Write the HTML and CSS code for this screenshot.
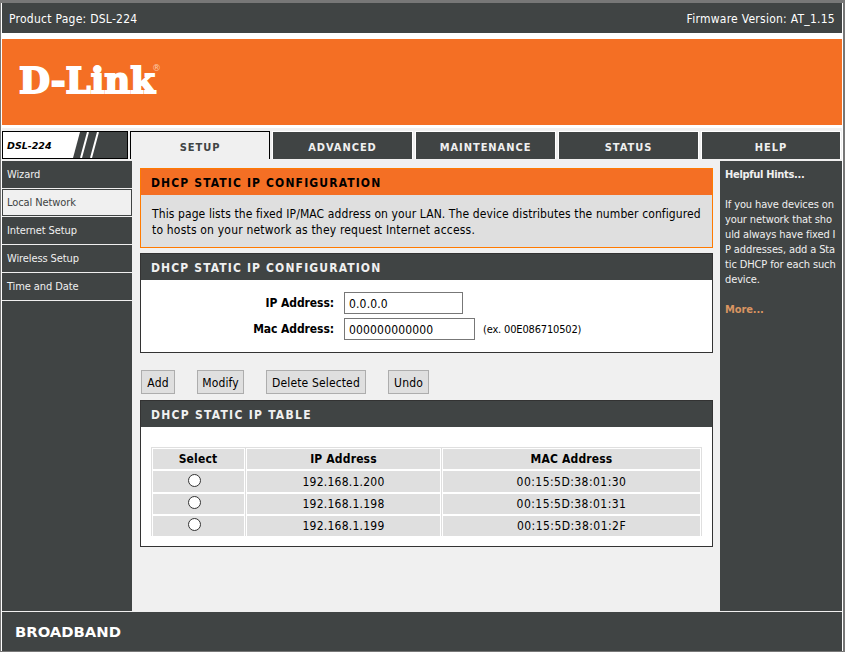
FILE: index.html
```html
<!DOCTYPE html>
<html lang="en">
<head>
<meta charset="utf-8">
<title>DHCP Static IP Configuration</title>
<link rel="stylesheet" href="styles.css">
</head>
<body>
<div class="page">
  <header class="topbar"><span class="product">Product Page: DSL-224</span><span class="firmware">Firmware Version: AT_1.15</span></header>
  <div class="banner">
    <svg width="150" height="40" viewBox="0 0 150 40"><text class="logo" x="2" y="32.5" textLength="136" lengthAdjust="spacingAndGlyphs">D-Link</text><text class="reg" x="135" y="11">®</text></svg>
  </div>
  <nav class="tabs">
    <div class="model"><span>DSL-224</span>
      <svg width="54" height="26" viewBox="0 0 54 26"><path class="slab" d="M7 0H54V26H0Z"/><path class="stripe" d="M15 0L8 26M25 0L18 26"/></svg>
    </div>
    <div class="tab active"><span>SETUP</span></div>
    <div class="tab"><span>ADVANCED</span></div>
    <div class="tab"><span>MAINTENANCE</span></div>
    <div class="tab"><span>STATUS</span></div>
    <div class="tab last"><span>HELP</span></div>
  </nav>
  <div class="columns">
    <aside class="menu">
      <div class="item">Wizard</div>
      <div class="item current">Local Network</div>
      <div class="item">Internet Setup</div>
      <div class="item">Wireless Setup</div>
      <div class="item">Time and Date</div>
    </aside>
    <main>
      <section class="panel intro">
        <h2>DHCP STATIC IP CONFIGURATION</h2>
        <p><span class="line1">This page lists the fixed IP/MAC address on your LAN. The device distributes the number configured</span><br><span class="line2">to hosts on your network as they request Internet access.</span></p>
      </section>
      <section class="panel config">
        <h2>DHCP STATIC IP CONFIGURATION</h2>
        <div class="field"><label for="ip">IP Address:</label><input id="ip" class="ip" value="0.0.0.0"></div>
        <div class="field"><label for="mac">Mac Address:</label><input id="mac" class="mac" value="000000000000"><small>(ex. 00E086710502)</small></div>
      </section>
      <div class="buttons"><button class="b1">Add</button><button class="b2">Modify</button><button class="b3">Delete Selected</button><button class="b4">Undo</button></div>
      <section class="panel list">
        <h2>DHCP STATIC IP TABLE</h2>
        <div class="table">
          <div class="row head"><b>Select</b><b>IP Address</b><b>MAC Address</b></div>
          <div class="row"><span><i class="radio"></i></span><span>192.168.1.200</span><span class="addr">00:15:5D:38:01:30</span></div>
          <div class="row"><span><i class="radio"></i></span><span>192.168.1.198</span><span class="addr">00:15:5D:38:01:31</span></div>
          <div class="row"><span><i class="radio"></i></span><span>192.168.1.199</span><span class="addr">00:15:5D:38:01:2F</span></div>
        </div>
      </section>
    </main>
    <aside class="hints">
      <h3>Helpful Hints...</h3>
      <p>If you have devices on<br>your network that sho<br>uld always have fixed I<br>P addresses, add a Sta<br>tic DHCP for each such<br>device.</p>
      <a>More...</a>
    </aside>
  </div>
  <footer><svg width="120" height="20" viewBox="0 0 120 20"><text class="brand" x="1" y="15" textLength="106" lengthAdjust="spacingAndGlyphs">BROADBAND</text></svg></footer>
</div>
</body>
</html>
```
FILE: styles.css
```css
* { box-sizing: border-box; }
body {
  margin: 0;
  height: 652px;
  overflow: hidden;
  background: #777;
  padding: 3px 2px 1px 1px;
  font: 12px/16px "DejaVu Sans Condensed", "DejaVu Sans", sans-serif;
  font-stretch: condensed;
  color: #000;
}
h2, h3, p { margin: 0; }
.page {
  height: 648px;
  border: solid #fff;
  border-width: 0 1px;
  background: #f0f0f0;
  display: flex;
  flex-direction: column;
}
.topbar {
  height: 30px;
  background: #404444;
  color: #fff;
  display: flex;
  justify-content: space-between;
  align-items: center;
  padding: 1px 7px 0;
  letter-spacing: 0.26px;
}
.banner {
  height: 95px;
  border: solid #fff;
  border-width: 6px 0 3px;
  background: #f46f24;
  padding: 21px 15px 0;
}
.banner svg { display: block; }
.logo {
  font: bold 35px "DejaVu Serif", serif;
  fill: #fff;
  stroke: #fff;
  stroke-width: 1.8;
}
.reg { font: 9px "DejaVu Sans", sans-serif; fill: #fbc9ab; }
.tabs { height: 33px; padding-top: 3px; display: flex; }
.model {
  width: 126px;
  height: 28px;
  border: 1px solid #000;
  background: #fff;
  display: flex;
  justify-content: space-between;
  font: italic bold 9.5px/27px "DejaVu Sans", sans-serif;
  padding-left: 4px;
  margin-right: 2px;
}
.slab { fill: #404444; }
.stripe { stroke: #fff; stroke-width: 2; }
.tab {
  width: 141px;
  height: 28px;
  margin-right: 2px;
  border: 1px solid #fff;
  border-bottom: 0;
  background: #404444;
  color: #f0f0f0;
  text-align: center;
  font-weight: bold;
  font-size: 11px;
  line-height: 31px;
  letter-spacing: 0.95px;
}
.tab.active {
  width: 140px;
  border-color: #000;
  background: #f0f0f0;
  color: #404444;
}
.tab.last { width: 140px; margin-right: 0; }
.columns { height: 450px; display: flex; }
.menu { width: 130px; background: #404444; }
.item {
  height: 28px;
  border-bottom: 1px solid #f0f0f0;
  padding-left: 5px;
  line-height: 28px;
  font-size: 11px;
  letter-spacing: -0.1px;
  color: #f0f0f0;
}
.item.current {
  background: #f0f0f0;
  color: #404444;
  box-shadow: inset 0 0 0 1px #404444;
}
main { width: 588px; padding: 7px 7px 0 8px; }
.panel { width: 573px; border: 1px solid #333; background: #fff; }
.panel h2 {
  height: 26px;
  background: #404444;
  color: #f0f0f0;
  font-size: 12px;
  line-height: 28px;
  letter-spacing: 1.14px;
  padding-left: 10px;
}
.list h2 { letter-spacing: 1.28px; }
.intro { height: 80px; border-color: #ff7a00; background: #dfdfdf; }
.intro h2 { background: #f46f24; color: #000; }
.intro p { padding: 11px 0 0 11px; white-space: nowrap; }
.line1 { letter-spacing: 0.1px; }
.line2 { letter-spacing: 0.19px; }
.config { height: 100px; margin-top: 5px; }
.config h2 { margin-bottom: 12px; }
.field { height: 26px; display: flex; }
.field label {
  width: 193px;
  margin-right: 10px;
  text-align: right;
  font-weight: bold;
  letter-spacing: -0.08px;
  line-height: 23px;
}
.field input {
  height: 22px;
  border: 1px solid #777;
  padding: 1px 4px 0;
  font: inherit;
  letter-spacing: 0.16px;
  background: #fff;
}
.ip { width: 119px; }
.mac { width: 131px; }
.field small { font-size: 11px; line-height: 24px; margin-left: 8px; letter-spacing: -0.17px; }
.buttons { height: 47px; padding: 17px 0 0 1px; display: flex; }
.buttons button {
  height: 24px;
  padding: 1px 0 0;
  font: inherit;
  letter-spacing: 0.14px;
  color: #000;
  background: #dfdfdf;
  border: 1px solid #adadad;
  border-radius: 0;
  white-space: nowrap;
}
.b1 { width: 34px; margin-right: 22px; }
.b2 { width: 47px; margin-right: 22px; }
.b3 { width: 100px; margin-right: 22px; }
.b4 { width: 41px; }
.list { height: 147px; }
.table {
  margin: 20px 0 0 10px;
  width: 551px;
  background: #dfdfdf;
  padding: 1px;
  display: grid;
  gap: 1px;
}
.row {
  display: grid;
  grid-template-columns: 93px 195px 259px;
  gap: 1px;
  height: 21px;
}
.row > * {
  border: 1px solid #fff;
  text-align: center;
  line-height: 22px;
  letter-spacing: 0.24px;
}
.row > .addr { letter-spacing: 0.46px; }
.row > :first-child { padding-right: 1px; }
.row.head { height: 20px; margin-bottom: 1px; }
.row.head > * { line-height: 20px; letter-spacing: 0.16px; }
.radio {
  display: block;
  width: 13px;
  height: 13px;
  margin: 3px auto 0 35px;
  border: 1px solid #333;
  border-radius: 50%;
  background: #fff;
}
.hints {
  width: 122px;
  background: #404444;
  color: #f0f0f0;
  padding: 6px 0 0 5px;
  font-size: 11px;
  line-height: 15px;
  letter-spacing: -0.12px;
  white-space: nowrap;
}
.hints h3 { font-size: 11px; margin-bottom: 15px; letter-spacing: -0.3px; }
.hints p { margin-bottom: 15px; }
.hints a { font-weight: bold; color: #d99562; }
footer {
  height: 40px;
  border-top: 1px solid #f0f0f0;
  background: #404444;
  padding: 10px 12px;
}
.brand { font: bold 14px "DejaVu Sans", sans-serif; fill: #fff; }
```
